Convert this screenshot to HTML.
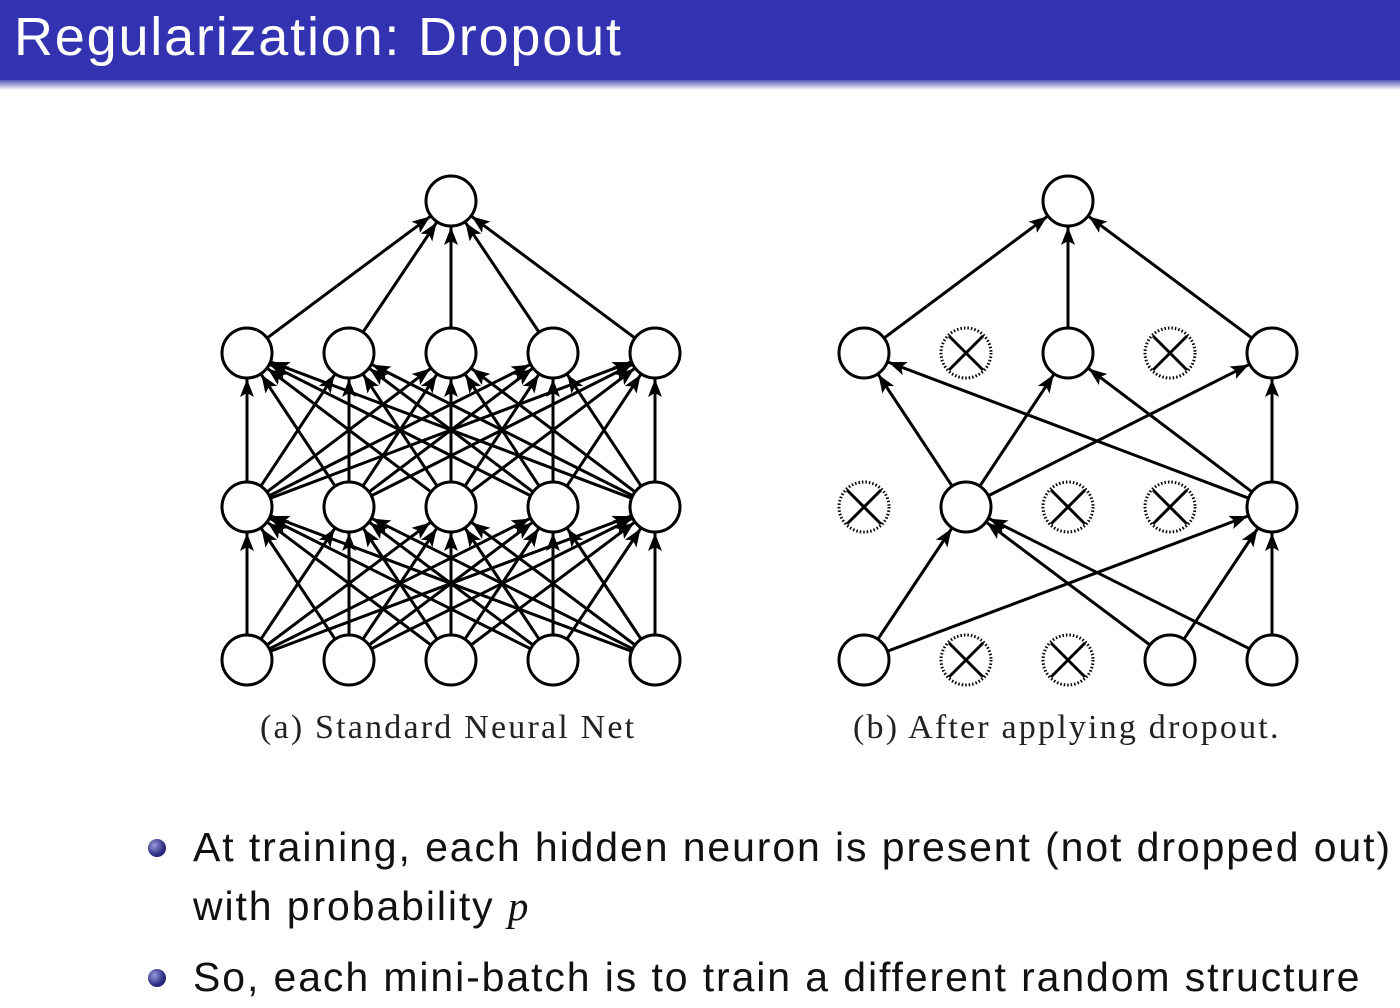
<!DOCTYPE html>
<html><head><meta charset="utf-8"><style>
body{margin:0;width:1400px;height:1008px;background:#fff;overflow:hidden;position:relative;font-family:"Liberation Sans",sans-serif}
.hdr{position:absolute;left:0;top:0;width:1400px;height:80px;background:#3333b2}
.fade{position:absolute;left:0;top:80px;width:1400px;height:10px;background:linear-gradient(#5555bb,#fff)}
.title{position:absolute;left:14px;top:6px;color:#fff;font-size:54px;letter-spacing:1.8px}
.cap{position:absolute;top:709px;font-family:"Liberation Serif",serif;font-size:34px;color:#222;letter-spacing:2.2px;white-space:nowrap}
.b{position:absolute;left:193px;font-size:41px;color:#111;white-space:nowrap;letter-spacing:1.9px}
.dot{position:absolute;left:148px;width:18px;height:18px;border-radius:50%;background:radial-gradient(circle at 35% 35%,#9999dd,#2a2a80 60%,#10104a)}
</style></head><body>
<div class="hdr"><div class="title">Regularization: Dropout</div></div><div class="fade"></div>
<svg id="s" width="1400" height="1008" style="position:absolute;left:0;top:0">
<defs><marker id="ar2" markerWidth="18" markerHeight="14" refX="18" refY="7" orient="auto" markerUnits="userSpaceOnUse" viewBox="0 0 18 14"><path d="M0,0L18,7L0,14L4,7z" fill="#000"/></marker></defs>
<g id="g"></g></svg>
<div class="cap" style="left:260px">(a) Standard Neural Net</div>
<div class="cap" style="left:853px">(b) After applying dropout.</div>
<div class="dot" style="top:839px"></div>
<div class="b" style="top:824px">At training, each hidden neuron is present (not dropped out)</div>
<div class="b" style="top:882px">with probability <i style="font-family:'Liberation Serif',serif">p</i></div>
<div class="dot" style="top:969px"></div>
<div class="b" style="top:954px">So, each mini-batch is to train a different random structure</div>
<script>
var g=document.getElementById('g'),R=25,s='';
var ys=[660,507,353],ty=201;
function edge(x1,y1,x2,y2){var dx=x2-x1,dy=y2-y1,l=Math.hypot(dx,dy),ux=dx/l,uy=dy/l;
s+='<line x1="'+(x1+ux*R)+'" y1="'+(y1+uy*R)+'" x2="'+(x2-ux*(R+1))+'" y2="'+(y2-uy*(R+1))+'" stroke="#000" stroke-width="3" marker-end="url(#ar2)"/>';}
function node(x,y){s+='<circle cx="'+x+'" cy="'+y+'" r="'+R+'" fill="#fff" stroke="#000" stroke-width="3"/>';}
function drop(x,y){s+='<circle cx="'+x+'" cy="'+y+'" r="'+R+'" fill="#fff" stroke="#000" stroke-width="3" stroke-dasharray="1.5 2"/>';
var d=17;s+='<line x1="'+(x-d)+'" y1="'+(y-d)+'" x2="'+(x+d)+'" y2="'+(y+d)+'" stroke="#000" stroke-width="3"/><line x1="'+(x-d)+'" y1="'+(y+d)+'" x2="'+(x+d)+'" y2="'+(y-d)+'" stroke="#000" stroke-width="3"/>';}
var A=[247,349,451,553,655];
for(var l=0;l<2;l++)for(var i=0;i<5;i++)for(var j=0;j<5;j++)edge(A[i],ys[l],A[j],ys[l+1]);
for(var i=0;i<5;i++)edge(A[i],ys[2],451,ty);
for(var l=0;l<3;l++)for(var i=0;i<5;i++)node(A[i],ys[l]);node(451,ty);
var B=[864,966,1068,1170,1272];
[[0,1],[0,4],[3,1],[3,4],[4,1],[4,4]].forEach(function(e){edge(B[e[0]],ys[0],B[e[1]],ys[1]);});
[1,4].forEach(function(i){[0,2,4].forEach(function(j){edge(B[i],ys[1],B[j],ys[2]);});});
[0,2,4].forEach(function(i){edge(B[i],ys[2],1068,ty);});
var P=[[0,3,4],[1,4],[0,2,4]];
for(var l=0;l<3;l++)for(var i=0;i<5;i++){if(P[l].indexOf(i)>=0)node(B[i],ys[l]);else drop(B[i],ys[l]);}
node(1068,ty);
g.innerHTML=s;
</script>
</body></html>
